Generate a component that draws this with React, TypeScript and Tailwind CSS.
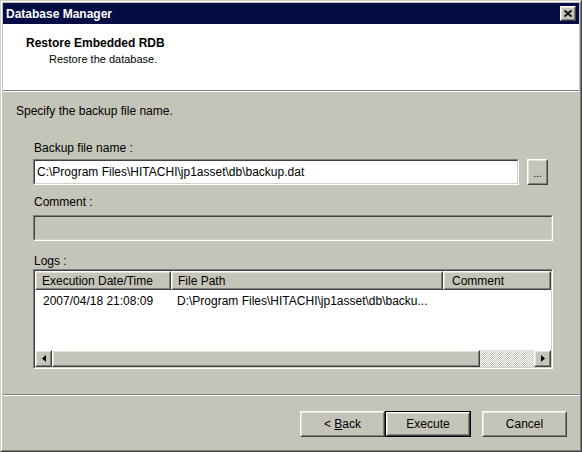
import React from 'react';

const Sunken: React.FC<{ className?: string; inner?: string; children?: React.ReactNode }> = ({ className = '', inner = '', children }) => (
    <div className={`border border-t-[#808080] border-l-[#808080] border-b-white border-r-white ${className}`}>
        <div className={`h-full border border-t-[#404040] border-l-[#404040] border-b-[#d4d0c8] border-r-[#d4d0c8] ${inner}`}>{children}</div>
    </div>
);

const Raised: React.FC<{ className?: string; inner?: string; children?: React.ReactNode }> = ({ className = '', inner = '', children }) => (
    <div className={`border border-t-white border-l-white border-b-[#404040] border-r-[#404040] ${className}`}>
        <div className={`h-full border border-t-[#e4e3da] border-l-[#e4e3da] border-b-[#808080] border-r-[#808080] ${inner}`}>{children}</div>
    </div>
);

const Arrow: React.FC<{ dir: 'left' | 'right' }> = ({ dir }) => (
    <svg width="4" height="7" viewBox="0 0 4 7">
        {dir === 'left' ? <path d="M4 0 L0 3.5 L4 7 Z" fill="#000" /> : <path d="M0 0 L4 3.5 L0 7 Z" fill="#000" />}
    </svg>
);

const Button: React.FC<{ label: React.ReactNode; isDefault?: boolean; className?: string }> = ({ label, isDefault, className = '' }) => {
    const body = (
        <Raised className="h-full w-full" inner="flex items-center justify-center bg-[#c5c4b9]">
            {label}
        </Raised>
    );
    return isDefault ? (
        <div className={`h-[26px] border border-black ${className}`}>{body}</div>
    ) : (
        <div className={`h-[26px] ${className}`}>{body}</div>
    );
};

export default function App() {
    return (
        <div className="w-[582px] h-[452px] bg-[#c5c4b9] font-['Liberation_Sans',Arial,sans-serif] text-[12px] text-black border border-t-[#d4d0c8] border-l-[#d4d0c8] border-b-[#404040] border-r-[#404040]">
            <div className="h-full border border-t-white border-l-white border-b-[#808080] border-r-[#808080] p-px flex flex-col">
                {/* title bar */}
                <div className="h-[21px] shrink-0 bg-[#030c45] flex items-center justify-between pl-[3px] pr-[3px]">
                    <span className="text-white font-bold text-[12px] leading-none">Database Manager</span>
                    <Raised className="w-[16px] h-[15px]" inner="flex items-center justify-center bg-[#c5c4b9]">
                        <svg width="8" height="7" viewBox="0 0 8 7">
                            <path d="M0.5 0.5 L7.5 6.5 M7.5 0.5 L0.5 6.5" stroke="#000" strokeWidth="1.8" />
                        </svg>
                    </Raised>
                </div>

                {/* header */}
                <div className="h-[66px] shrink-0 bg-white pt-[12px] pl-[23px]">
                    <div className="font-bold text-[12px] leading-[15px]">Restore Embedded RDB</div>
                    <div className="pl-[23px] text-[11px] leading-[15px] pt-px">Restore the database.</div>
                </div>
                <div className="h-[2px] shrink-0 border-t border-t-[#808080] border-b border-b-white" />

                {/* body */}
                <div className="h-[302px] shrink-0 pt-[12px]">
                    <div className="pl-[13px] leading-[15px]">Specify the backup file name.</div>
                    <div className="ml-[30px] w-[520px]">
                        <div className="mt-[22px] pl-px leading-[15px]">Backup file name :</div>
                        <div className="mt-[3px] flex gap-[8px]">
                            <Sunken className="w-[486px] h-[26px]" inner="bg-white flex items-center pl-[2px]">
                                C:\Program Files\HITACHI\jp1asset\db\backup.dat
                            </Sunken>
                            <Raised className="w-[21px] h-[26px]" inner="flex items-center justify-center bg-[#c5c4b9] text-[10px] leading-none pt-[3px]">
                                ...
                            </Raised>
                        </div>
                        <div className="mt-[10px] pl-px leading-[15px]">Comment :</div>
                        <Sunken className="mt-[5px] h-[26px]" inner="bg-[#c5c4b9]" />
                        <div className="mt-[13px] pl-px leading-[15px]">Logs :</div>
                        <Sunken className="h-[100px]" inner="bg-white flex flex-col">
                            <div className="h-[19px] shrink-0 flex">
                                <Raised className="w-[136px] h-full" inner="bg-[#c5c4b9] pl-[5px] flex items-center">
                                    Execution Date/Time
                                </Raised>
                                <Raised className="w-[272px] h-full" inner="bg-[#c5c4b9] pl-[5px] flex items-center">
                                    File Path
                                </Raised>
                                <Raised className="w-[108px] h-full" inner="bg-[#c5c4b9] pl-[7px] flex items-center">
                                    Comment
                                </Raised>
                            </div>
                            <div className="flex-1 flex pt-[4px] leading-[15px]">
                                <div className="w-[136px] pl-[8px]">2007/04/18 21:08:09</div>
                                <div className="w-[272px] pl-[6px]">D:\Program Files\HITACHI\jp1asset\db\backu...</div>
                                <div className="w-[108px]" />
                            </div>
                            <div className="h-[17px] shrink-0 flex">
                                <Raised className="w-[17px] h-full" inner="bg-[#c5c4b9] flex items-center justify-center">
                                    <Arrow dir="left" />
                                </Raised>
                                <Raised className="w-[428px] h-full" inner="bg-[#c5c4b9]" />
                                <div className="w-[54px] h-full bg-[repeating-conic-gradient(#c5c4b9_0_25%,#ffffff_0_50%)] bg-[length:2px_2px]" />
                                <Raised className="w-[17px] h-full" inner="bg-[#c5c4b9] flex items-center justify-center">
                                    <Arrow dir="right" />
                                </Raised>
                            </div>
                        </Sunken>
                    </div>
                </div>
                <div className="h-[2px] shrink-0 border-t border-t-[#808080] border-b border-b-white" />

                {/* footer */}
                <div className="flex-1 flex justify-end items-start pt-[15px] pr-[12px]">
                    <Button className="w-[85px]" label={<span>&lt; <span className="underline">B</span>ack</span>} />
                    <Button className="w-[86px]" isDefault label="Execute" />
                    <Button className="w-[85px] ml-[11px]" label="Cancel" />
                </div>
            </div>
        </div>
    );
}
